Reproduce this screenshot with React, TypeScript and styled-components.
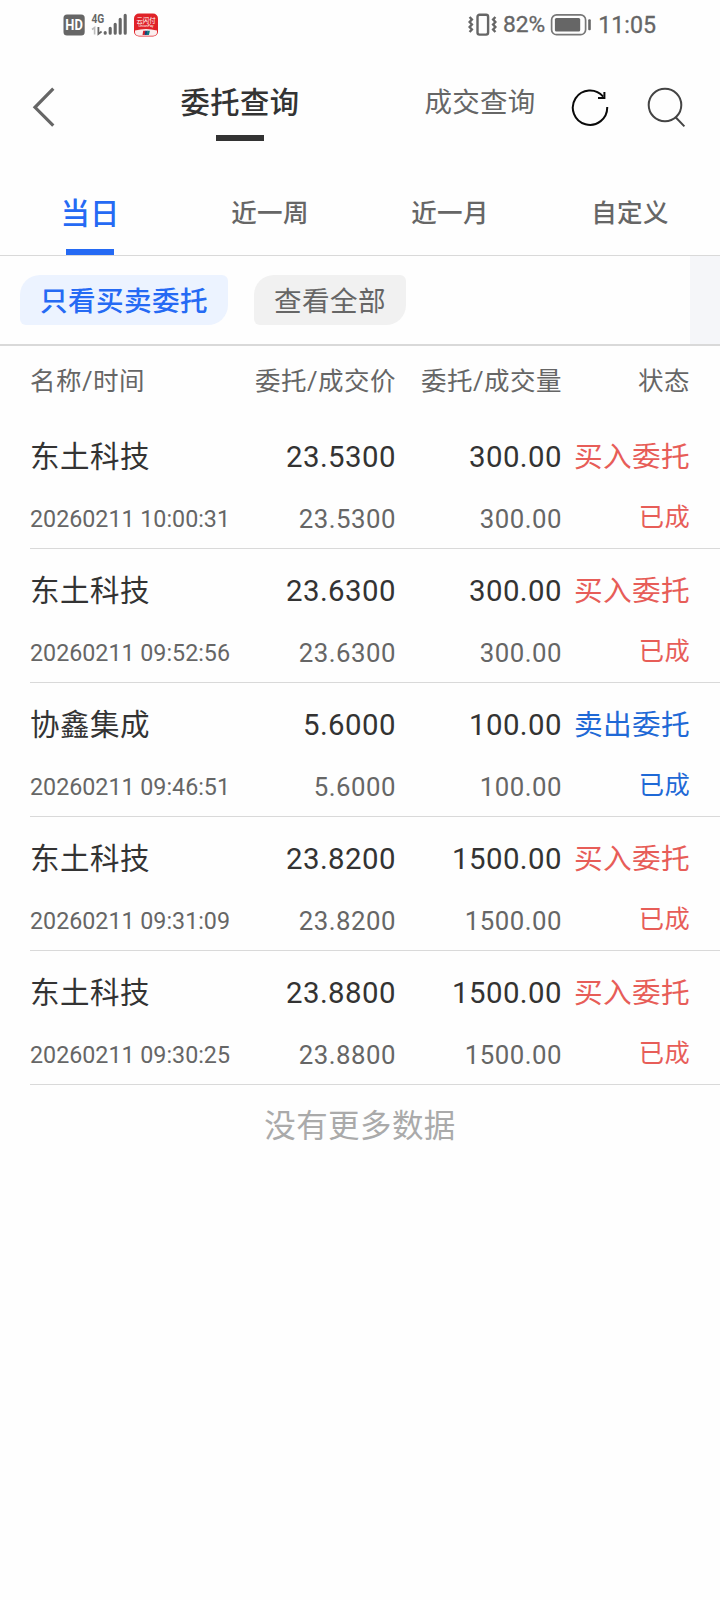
import React from 'react';
import styled, { createGlobalStyle } from 'styled-components';

const GlobalStyle = createGlobalStyle`
  * { box-sizing: border-box; }
  body {
    margin: 0;
    background: #fefefe;
    font-family: Roboto, "Noto Sans CJK SC", sans-serif;
    color: #333;
  }
`;

const Screen = styled.div`
  width: 720px;
  min-height: 1600px;
  background: #fefefe;
  overflow: hidden;
  white-space: nowrap;
`;

const StatusBar = styled.header`
  display: flex;
  justify-content: space-between;
  align-items: center;
  height: 50px;
  padding: 0 64px 0 63px;
  color: #666;
`;

const StatusGroup = styled.div`
  display: flex;
  align-items: center;
`;

const StatusText = styled.span<{ $size: number }>`
  font-size: ${(p) => p.$size}px;
  font-weight: 400;
  -webkit-text-stroke: 0.3px #666;
  line-height: 50px;
`;

const StatusIcon = styled.svg<{ $gap?: number }>`
  display: block;
  margin-right: ${(p) => p.$gap ?? 0}px;
`;

const NavBar = styled.nav`
  display: flex;
  height: 110px;
`;

const BackButton = styled.button`
  display: flex;
  align-items: flex-start;
  width: 120px;
  height: 110px;
  padding: 34px 0 0 30px;
  border: 0;
  background: none;
`;

const NavTitle = styled.div<{ $active?: boolean }>`
  display: flex;
  flex-direction: column;
  align-items: center;
  width: 240px;
  height: 110px;
  padding-top: 33px;
  font-size: ${(p) => (p.$active ? 29.3 : 27.5)}px;
  letter-spacing: ${(p) => (p.$active ? 0.4 : 0.3)}px;
  font-weight: ${(p) => (p.$active ? 500 : 400)};
  line-height: 40px;
  color: ${(p) => (p.$active ? '#333' : '#666')};

  &::after {
    content: '';
    width: 48px;
    height: 6px;
    margin-top: 12px;
    background: ${(p) => (p.$active ? '#333' : 'transparent')};
  }
`;

const NavActions = styled.div`
  display: flex;
  gap: 34px;
  margin-left: -30px;
  padding-top: 36px;
`;

const Tabs = styled.div`
  display: grid;
  grid-template-columns: repeat(4, 180px);
  height: 96px;
  border-bottom: 1px solid #d9d9d9;
`;

const Tab = styled.div<{ $active?: boolean }>`
  display: flex;
  flex-direction: column;
  justify-content: space-between;
  align-items: center;
  padding-top: ${(p) => (p.$active ? 34 : 33)}px;
  font-size: ${(p) => (p.$active ? 29.3 : 25.5)}px;
  letter-spacing: 0.3px;
  font-weight: 500;
  line-height: 40px;
  color: ${(p) => (p.$active ? '#256af4' : '#666')};

  &::after {
    content: '';
    width: 48px;
    height: 6px;
    background: ${(p) => (p.$active ? '#256af4' : 'transparent')};
  }
`;

const FilterBar = styled.div`
  display: flex;
  align-items: center;
  gap: 26px;
  height: 90px;
  padding-left: 20px;
  border-bottom: 2px solid #d9d9d9;
`;

const Chip = styled.div<{ $active?: boolean }>`
  width: ${(p) => (p.$active ? 208 : 152)}px;
  height: 50px;
  padding-left: 20px;
  border-radius: 20px 6px 20px 6px;
  font-size: 27.6px;
  letter-spacing: 0.4px;
  line-height: 54px;
  font-weight: ${(p) => (p.$active ? 500 : 400)};
  color: ${(p) => (p.$active ? '#256af4' : '#666')};
  background: ${(p) => (p.$active ? '#ecf3ff' : '#f1f1f1')};
`;

const FilterEdge = styled.div`
  align-self: stretch;
  width: 30px;
  margin-left: auto;
  background: #f5f6f9;
`;

const columns = `
  display: grid;
  grid-template-columns: 206px 160px 166px 128px;
`;

const TableHead = styled.div`
  ${columns}
  height: 69px;
  padding-left: 30px;
  font-size: 25.5px;
  letter-spacing: 0.5px;
  line-height: 70px;
  color: #666;
`;

const HeadCell = styled.div<{ $right?: boolean }>`
  text-align: ${(p) => (p.$right ? 'right' : 'left')};
`;

const OrderRow = styled.div`
  ${columns}
  grid-template-rows: 83px 50px;
  height: 134px;
  margin-left: 30px;
  border-bottom: 1px solid #d9d9d9;
`;

const StockName = styled.div`
  font-size: 29.5px;
  letter-spacing: 0.5px;
  line-height: 85px;
`;

const OrderTime = styled.div`
  font-size: 23.25px;
  line-height: 43px;
  color: #666;
`;

const Figure = styled.div<{ $dealt?: boolean }>`
  text-align: right;
  font-size: ${(p) => (p.$dealt ? 25.8 : 29.4)}px;
  letter-spacing: ${(p) => (p.$dealt ? 0.5 : 0.45)}px;
  line-height: ${(p) => (p.$dealt ? 43 : 85)}px;
  color: ${(p) => (p.$dealt ? '#666' : '#333')};
`;

const OrderState = styled.div<{ $side: Side; $small?: boolean }>`
  text-align: right;
  font-size: ${(p) => (p.$small ? 25.3 : 28.7)}px;
  letter-spacing: 0.3px;
  line-height: ${(p) => (p.$small ? 39 : 85)}px;
  color: ${(p) => (p.$side === 'buy' ? '#e75d58' : '#1f69d6')};
`;

const EndNote = styled.div`
  padding-top: 20px;
  font-size: 31.5px;
  letter-spacing: 0.4px;
  line-height: 44px;
  text-align: center;
  color: #aaa;
`;

type Side = 'buy' | 'sell';

const orders: { name: string; time: string; price: string; qty: string; side: Side }[] = [
  { name: '东土科技', time: '20260211 10:00:31', price: '23.5300', qty: '300.00', side: 'buy' },
  { name: '东土科技', time: '20260211 09:52:56', price: '23.6300', qty: '300.00', side: 'buy' },
  { name: '协鑫集成', time: '20260211 09:46:51', price: '5.6000', qty: '100.00', side: 'sell' },
  { name: '东土科技', time: '20260211 09:31:09', price: '23.8200', qty: '1500.00', side: 'buy' },
  { name: '东土科技', time: '20260211 09:30:25', price: '23.8800', qty: '1500.00', side: 'buy' },
];

const HdIcon = () => (
  <StatusIcon $gap={6} width="22" height="22" viewBox="0 0 22 22">
    <rect x="0.5" y="0.5" width="21.2" height="21" rx="3.5" fill="#666" />
    <text x="11.1" y="16.3" textAnchor="middle" fontSize="14.2" fontWeight="700" fill="#fff" textLength="17.5" lengthAdjust="spacingAndGlyphs">HD</text>
  </StatusIcon>
);

const SignalIcon = () => (
  <StatusIcon $gap={7} width="36" height="26" viewBox="0 0 36 26">
    <text x="0.5" y="10.6" fontSize="13" fontWeight="700" fill="#666" textLength="12.8" lengthAdjust="spacingAndGlyphs">4G</text>
    <path d="M1 17.5L3.6 15.5V22.5" stroke="#bbb" strokeWidth="1.6" fill="none" />
    <path d="M7.4 15V22L10.6 19.5" stroke="#666" strokeWidth="1.8" fill="none" />
    <path d="M14.2 20.6V21.2M19.2 16.3V21.2M24.2 12.3V21.2M29.2 7.3V21.2M34.2 3.3V21.2" stroke="#666" strokeWidth="3.1" strokeLinecap="round" />
  </StatusIcon>
);

const UnionPayIcon = () => (
  <StatusIcon width="24" height="24" viewBox="0 0 24 24">
    <rect x="0" y="0.5" width="24" height="23" rx="5" fill="#e02228" />
    <path d="M1 17.6Q12 14.5 23 17.6V19Q23 22.8 19 22.8H5Q1 22.8 1 19Z" fill="#fbeeee" />
    <text x="2.5" y="9.6" fontSize="6.6" fill="#fff" textLength="19" lengthAdjust="spacingAndGlyphs">云闪付</text>
    <text x="12" y="14" textAnchor="middle" fontSize="3.6" fill="#fff">UnionPay</text>
    <path d="M9.2 17.8h2.5l-1 4.2H8.5z" fill="#d3222a" />
    <path d="M11.3 17.8h2.5l-1 4.2h-2.3z" fill="#17457c" />
    <path d="M13.4 17.8h2.5l-1 4.2h-2.2z" fill="#0a7c80" />
  </StatusIcon>
);

const VibrateIcon = () => (
  <StatusIcon $gap={6} width="29" height="24" viewBox="0 0 29 24" fill="none" stroke="#666">
    <rect x="9.5" y="1.8" width="10.6" height="19.8" rx="2" strokeWidth="2.4" />
    <path d="M1.6 4L3.9 6.5L1.6 9L3.9 11.5L1.6 14L3.9 16.5L1.6 19M27.4 4L25.1 6.5L27.4 9L25.1 11.5L27.4 14L25.1 16.5L27.4 19" strokeWidth="2.4" />
  </StatusIcon>
);

const BatteryIcon = () => (
  <StatusIcon $gap={7} width="41" height="22" viewBox="0 0 41 22">
    <rect x="1.6" y="0.9" width="34" height="19.8" rx="5" fill="none" stroke="#777" strokeWidth="1.7" />
    <rect x="4.9" y="4" width="25.3" height="13.6" rx="1.5" fill="#666" />
    <rect x="38.2" y="5.3" width="2.6" height="11" rx="1" fill="#666" />
  </StatusIcon>
);

const BackIcon = () => (
  <svg width="28" height="46" viewBox="30 84 28 46" fill="none" stroke="#666" strokeWidth="3.2">
    <path d="M53.3 88.7L35 107.3L53.3 125.7" />
  </svg>
);

const RefreshIcon = () => (
  <svg width="42" height="42" viewBox="570 86 42 42" fill="none" stroke="#0a0a0a" strokeWidth="2">
    <path d="M607.2 107A17.2 17.2 0 1 1 603.2 96.6" />
    <path d="M604.4 92V98H598" />
  </svg>
);

const SearchIcon = () => (
  <svg width="42" height="44" viewBox="646 86 42 44" fill="none" stroke="#444" strokeWidth="2">
    <circle cx="665" cy="105" r="16.3" />
    <path d="M675.6 117.2L684.4 126.4" />
  </svg>
);

export default function App() {
  return (
    <Screen>
      <GlobalStyle />
      <StatusBar>
        <StatusGroup>
          <HdIcon />
          <SignalIcon />
          <UnionPayIcon />
        </StatusGroup>
        <StatusGroup>
          <VibrateIcon />
          <StatusText $size={22.8}>82%</StatusText>
          <StatusIcon width="5" height="1" />
          <BatteryIcon />
          <StatusText $size={23.2}>11:05</StatusText>
        </StatusGroup>
      </StatusBar>

      <NavBar>
        <BackButton aria-label="返回"><BackIcon /></BackButton>
        <NavTitle $active>委托查询</NavTitle>
        <NavTitle>成交查询</NavTitle>
        <NavActions>
          <RefreshIcon />
          <SearchIcon />
        </NavActions>
      </NavBar>

      <Tabs>
        <Tab $active>当日</Tab>
        <Tab>近一周</Tab>
        <Tab>近一月</Tab>
        <Tab>自定义</Tab>
      </Tabs>

      <FilterBar>
        <Chip $active>只看买卖委托</Chip>
        <Chip>查看全部</Chip>
        <FilterEdge />
      </FilterBar>

      <TableHead>
        <HeadCell>名称/时间</HeadCell>
        <HeadCell $right>委托/成交价</HeadCell>
        <HeadCell $right>委托/成交量</HeadCell>
        <HeadCell $right>状态</HeadCell>
      </TableHead>

      {orders.map((o) => (
        <OrderRow key={o.time}>
          <StockName>{o.name}</StockName>
          <Figure>{o.price}</Figure>
          <Figure>{o.qty}</Figure>
          <OrderState $side={o.side}>{o.side === 'buy' ? '买入委托' : '卖出委托'}</OrderState>
          <OrderTime>{o.time}</OrderTime>
          <Figure $dealt>{o.price}</Figure>
          <Figure $dealt>{o.qty}</Figure>
          <OrderState $side={o.side} $small>已成</OrderState>
        </OrderRow>
      ))}

      <EndNote>没有更多数据</EndNote>
    </Screen>
  );
}
